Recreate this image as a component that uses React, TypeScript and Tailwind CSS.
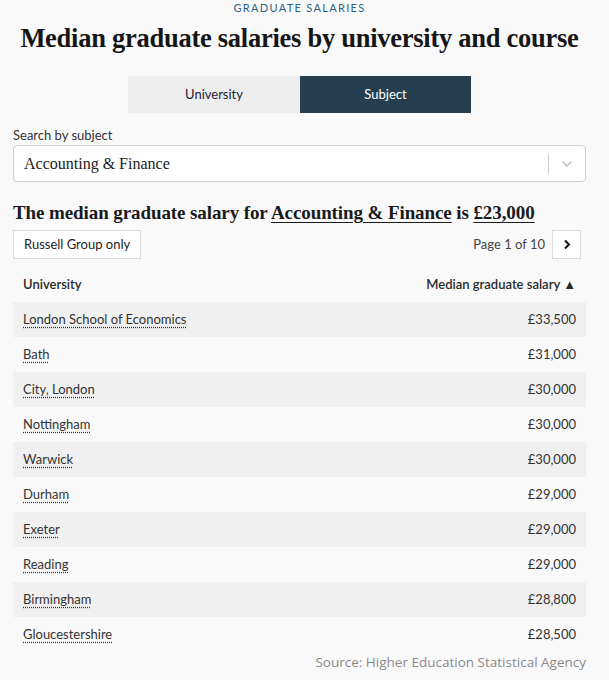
import React from "react";

const rows = [
  { name: "London School of Economics", salary: "£33,500" },
  { name: "Bath", salary: "£31,000" },
  { name: "City, London", salary: "£30,000" },
  { name: "Nottingham", salary: "£30,000" },
  { name: "Warwick", salary: "£30,000" },
  { name: "Durham", salary: "£29,000" },
  { name: "Exeter", salary: "£29,000" },
  { name: "Reading", salary: "£29,000" },
  { name: "Birmingham", salary: "£28,800" },
  { name: "Gloucestershire", salary: "£28,500" },
];

const serif = "font-['Liberation_Serif',serif]";
const sans = "font-['Lato',sans-serif]";

export default function App() {
  return (
    <div className="min-h-[680px] w-[609px] bg-[#f9f9fa] pl-[13px] pr-[23px] text-[#1d1d1d]">
      <p className={`${sans} pt-[1px] text-center text-[11px] leading-[14px] tracking-[0.12em] text-[#2c6384]`}>
        GRADUATE SALARIES
      </p>
      <h1 className={`${serif} mt-[8px] text-center text-[26.5px] font-bold leading-[30px] tracking-[-0.01em] text-[#161616]`}>
        Median graduate salaries by university and course
      </h1>

      <div className={`${sans} mt-[23px] flex justify-center text-[13px]`}>
        <button className="h-[37px] w-[172px] bg-[#ededee] text-[#1d2330]">University</button>
        <button className="h-[37px] w-[171px] bg-[#263f50] text-white">Subject</button>
      </div>

      <p className={`${sans} mt-[14px] text-[13px] leading-[16px] text-[#333]`}>Search by subject</p>
      <div className="mt-[2px] flex h-[37px] items-center rounded-[4px] border border-[#cfcfcf] bg-white">
        <span className={`${serif} flex-1 pl-[10px] text-[16px] text-[#222]`}>Accounting &amp; Finance</span>
        <span className="h-[20px] w-px bg-[#cccccc]" />
        <span className="flex w-[36px] items-center justify-center">
          <svg width="12" height="8" viewBox="0 0 12 8" fill="none">
            <path d="M1.5 1.5 L6 6 L10.5 1.5" stroke="#c4c4c4" strokeWidth="1.6" />
          </svg>
        </span>
      </div>

      <h2 className={`${serif} mt-[19px] text-[19px] font-bold leading-[24px] tracking-[-0.005em] text-[#1a1a1a]`}>
        The median graduate salary for <span className="underline underline-offset-[3px]">Accounting &amp; Finance</span> is{" "}
        <span className="underline underline-offset-[3px]">£23,000</span>
      </h2>

      <div className={`${sans} mt-[5px] flex items-center justify-between text-[13px]`}>
        <button className="h-[29px] border border-[#dcdcdc] bg-white px-[10px] text-[#222]">Russell Group only</button>
        <div className="flex items-center gap-[7px] pr-[5px]">
          <span className="text-[#444]">Page 1 of 10</span>
          <button className="flex h-[29px] w-[29px] items-center justify-center border border-[#dcdcdc] bg-white">
            <svg width="8" height="11" viewBox="0 0 8 11" fill="none">
              <path d="M2 1.5 L6 5.5 L2 9.5" stroke="#111" strokeWidth="2" />
            </svg>
          </button>
        </div>
      </div>

      <div className={`${sans} mt-[10px] text-[13px]`}>
        <div className="flex h-[33px] items-start justify-between px-[10px] pt-[6px] font-semibold text-[#2a2a2a]">
          <span>University</span>
          <span>Median graduate salary &#9650;</span>
        </div>
        {rows.map((r, i) => (
          <div
            key={r.name}
            className={`flex h-[35px] items-center justify-between px-[10px] ${i % 2 === 0 ? "bg-[#f0f0f0]" : ""}`}
          >
            <span className="underline decoration-dotted underline-offset-[3px] text-[#333]">{r.name}</span>
            <span className="text-[#333]">{r.salary}</span>
          </div>
        ))}
      </div>

      <p className="mt-[0px] text-right font-['Open_Sans',sans-serif] text-[13.5px] text-[#8a8a8a]">
        Source: Higher Education Statistical Agency
      </p>
    </div>
  );
}
